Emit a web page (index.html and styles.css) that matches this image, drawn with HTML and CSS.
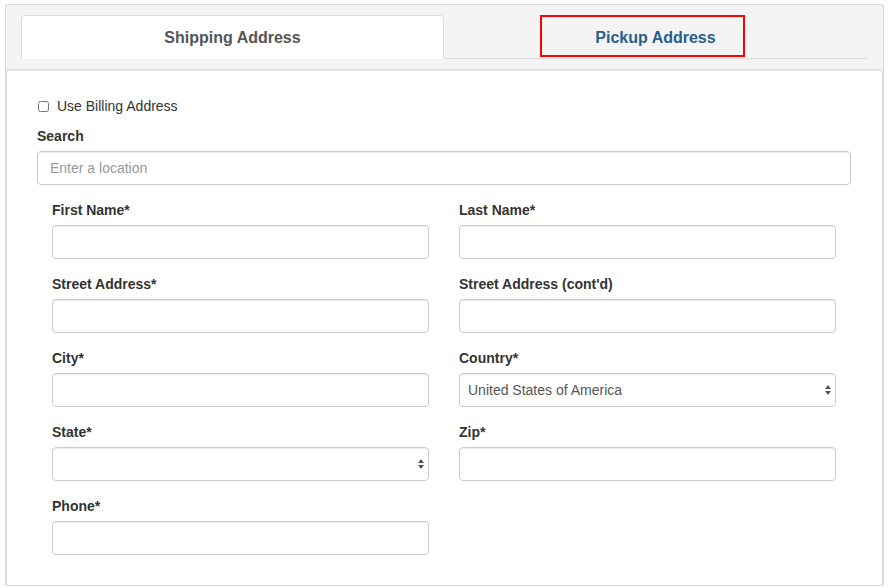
FILE: index.html
```html
<!DOCTYPE html>
<html lang="en">
<head>
<meta charset="UTF-8">
<meta name="viewport" content="width=device-width, initial-scale=1.0">
<title>Address</title>
<link rel="stylesheet" href="styles.css">
</head>
<body>
<div class="wrap">
<ul class="tabs">
<li class="tab active"><a href="#">Shipping Address</a></li>
<li class="tab"><a href="#" class="marked">Pickup Address</a></li>
</ul>

<div class="panel">
<label class="check"><input type="checkbox"> Use Billing Address</label>
<div class="form-group">
<label for="search">Search</label>
<input type="text" id="search" placeholder="Enter a location">
</div>

<div class="fields">
<div class="form-group">
<label for="first">First Name*</label>
<input type="text" id="first">
</div>
<div class="form-group">
<label for="last">Last Name*</label>
<input type="text" id="last">
</div>
<div class="form-group">
<label for="street">Street Address*</label>
<input type="text" id="street">
</div>
<div class="form-group">
<label for="street2">Street Address (cont'd)</label>
<input type="text" id="street2">
</div>
<div class="form-group">
<label for="city">City*</label>
<input type="text" id="city">
</div>
<div class="form-group">
<label for="country">Country*</label>
<div class="select-wrap">
<select id="country">
<option>United States of America</option>
</select>
<svg class="arrows" width="8" height="12" viewBox="0 0 8 12"><path d="M4 1 L7 5 L1 5 Z M4 11 L7 7 L1 7 Z" fill="#555"/></svg>
</div>
</div>
<div class="form-group">
<label for="state">State*</label>
<div class="select-wrap">
<select id="state">
<option></option>
</select>
<svg class="arrows" width="8" height="12" viewBox="0 0 8 12"><path d="M4 1 L7 5 L1 5 Z M4 11 L7 7 L1 7 Z" fill="#555"/></svg>
</div>
</div>
<div class="form-group">
<label for="zip">Zip*</label>
<input type="text" id="zip">
</div>
<div class="form-group">
<label for="phone">Phone*</label>
<input type="text" id="phone">
</div>
</div>
</div>
</div>
</body>
</html>
```

FILE: styles.css
```css
body {
font-family: "Liberation Sans", Arial, sans-serif;
font-size: 14px;
color: #333;
margin: 0;
padding: 4px 4px 0 5px;
background: #fff;
}

.wrap {
background: #f4f4f4;
border: 1px solid #dcdcdc;
border-bottom: none;
border-radius: 3px 3px 0 0;
}

.tabs {
list-style: none;
margin: 10px 16px 0 15px;
padding: 0;
display: flex;
border-bottom: 1px solid #ddd;
}

.tab {
flex: 1;
text-align: center;
margin-bottom: -1px;
}

.tab a {
display: block;
height: 42px;
line-height: 44px;
font-size: 16px;
font-weight: bold;
color: #285e8e;
text-decoration: none;
}

.tab.active a {
background: #fff;
color: #555;
border: 1px solid #ddd;
border-bottom-color: #fff;
border-radius: 4px 4px 0 0;
height: 42px;
}

/* highlighted tab: box sits a little left of the centred text */
.tab a.marked {
display: inline-block;
width: 205px;
height: 42px;
line-height: 42px;
margin-right: 26px;
padding-left: 26px;
border: 2px solid #f00;
box-sizing: border-box;
}

.panel {
margin-top: 10px;
background: #fff;
border: 1px solid #ddd;
border-top: 2px solid #e2e2e2;
border-radius: 3px;
padding: 25px 31px 15px 30px;
box-shadow: 0 1px 1px rgba(0, 0, 0, 0.08);
}

.check {
display: flex;
align-items: center;
height: 20px;
margin-bottom: 10px;
font-weight: normal;
}

.check input {
margin: 0 8px 0 1px;
width: 11px;
height: 11px;
}

label {
display: block;
font-weight: bold;
line-height: 20px;
margin-bottom: 5px;
}

.form-group {
margin-bottom: 15px;
}

input[type="text"], select {
display: block;
width: 100%;
height: 34px;
box-sizing: border-box;
padding: 6px 12px;
font-family: "Liberation Sans", Arial, sans-serif;
font-size: 14px;
color: #555;
background: #fff;
border: 1px solid #ccc;
border-radius: 4px;
box-shadow: inset 0 1px 1px rgba(0, 0, 0, 0.075);
}

input::placeholder {
color: #999;
}

select {
-webkit-appearance: none;
appearance: none;
padding-left: 8px;
}

.select-wrap {
position: relative;
}

.arrows {
position: absolute;
right: 4px;
top: 11px;
}

.fields {
display: grid;
grid-template-columns: 1fr 1fr;
column-gap: 30px;
padding: 0 15px;
}
```
